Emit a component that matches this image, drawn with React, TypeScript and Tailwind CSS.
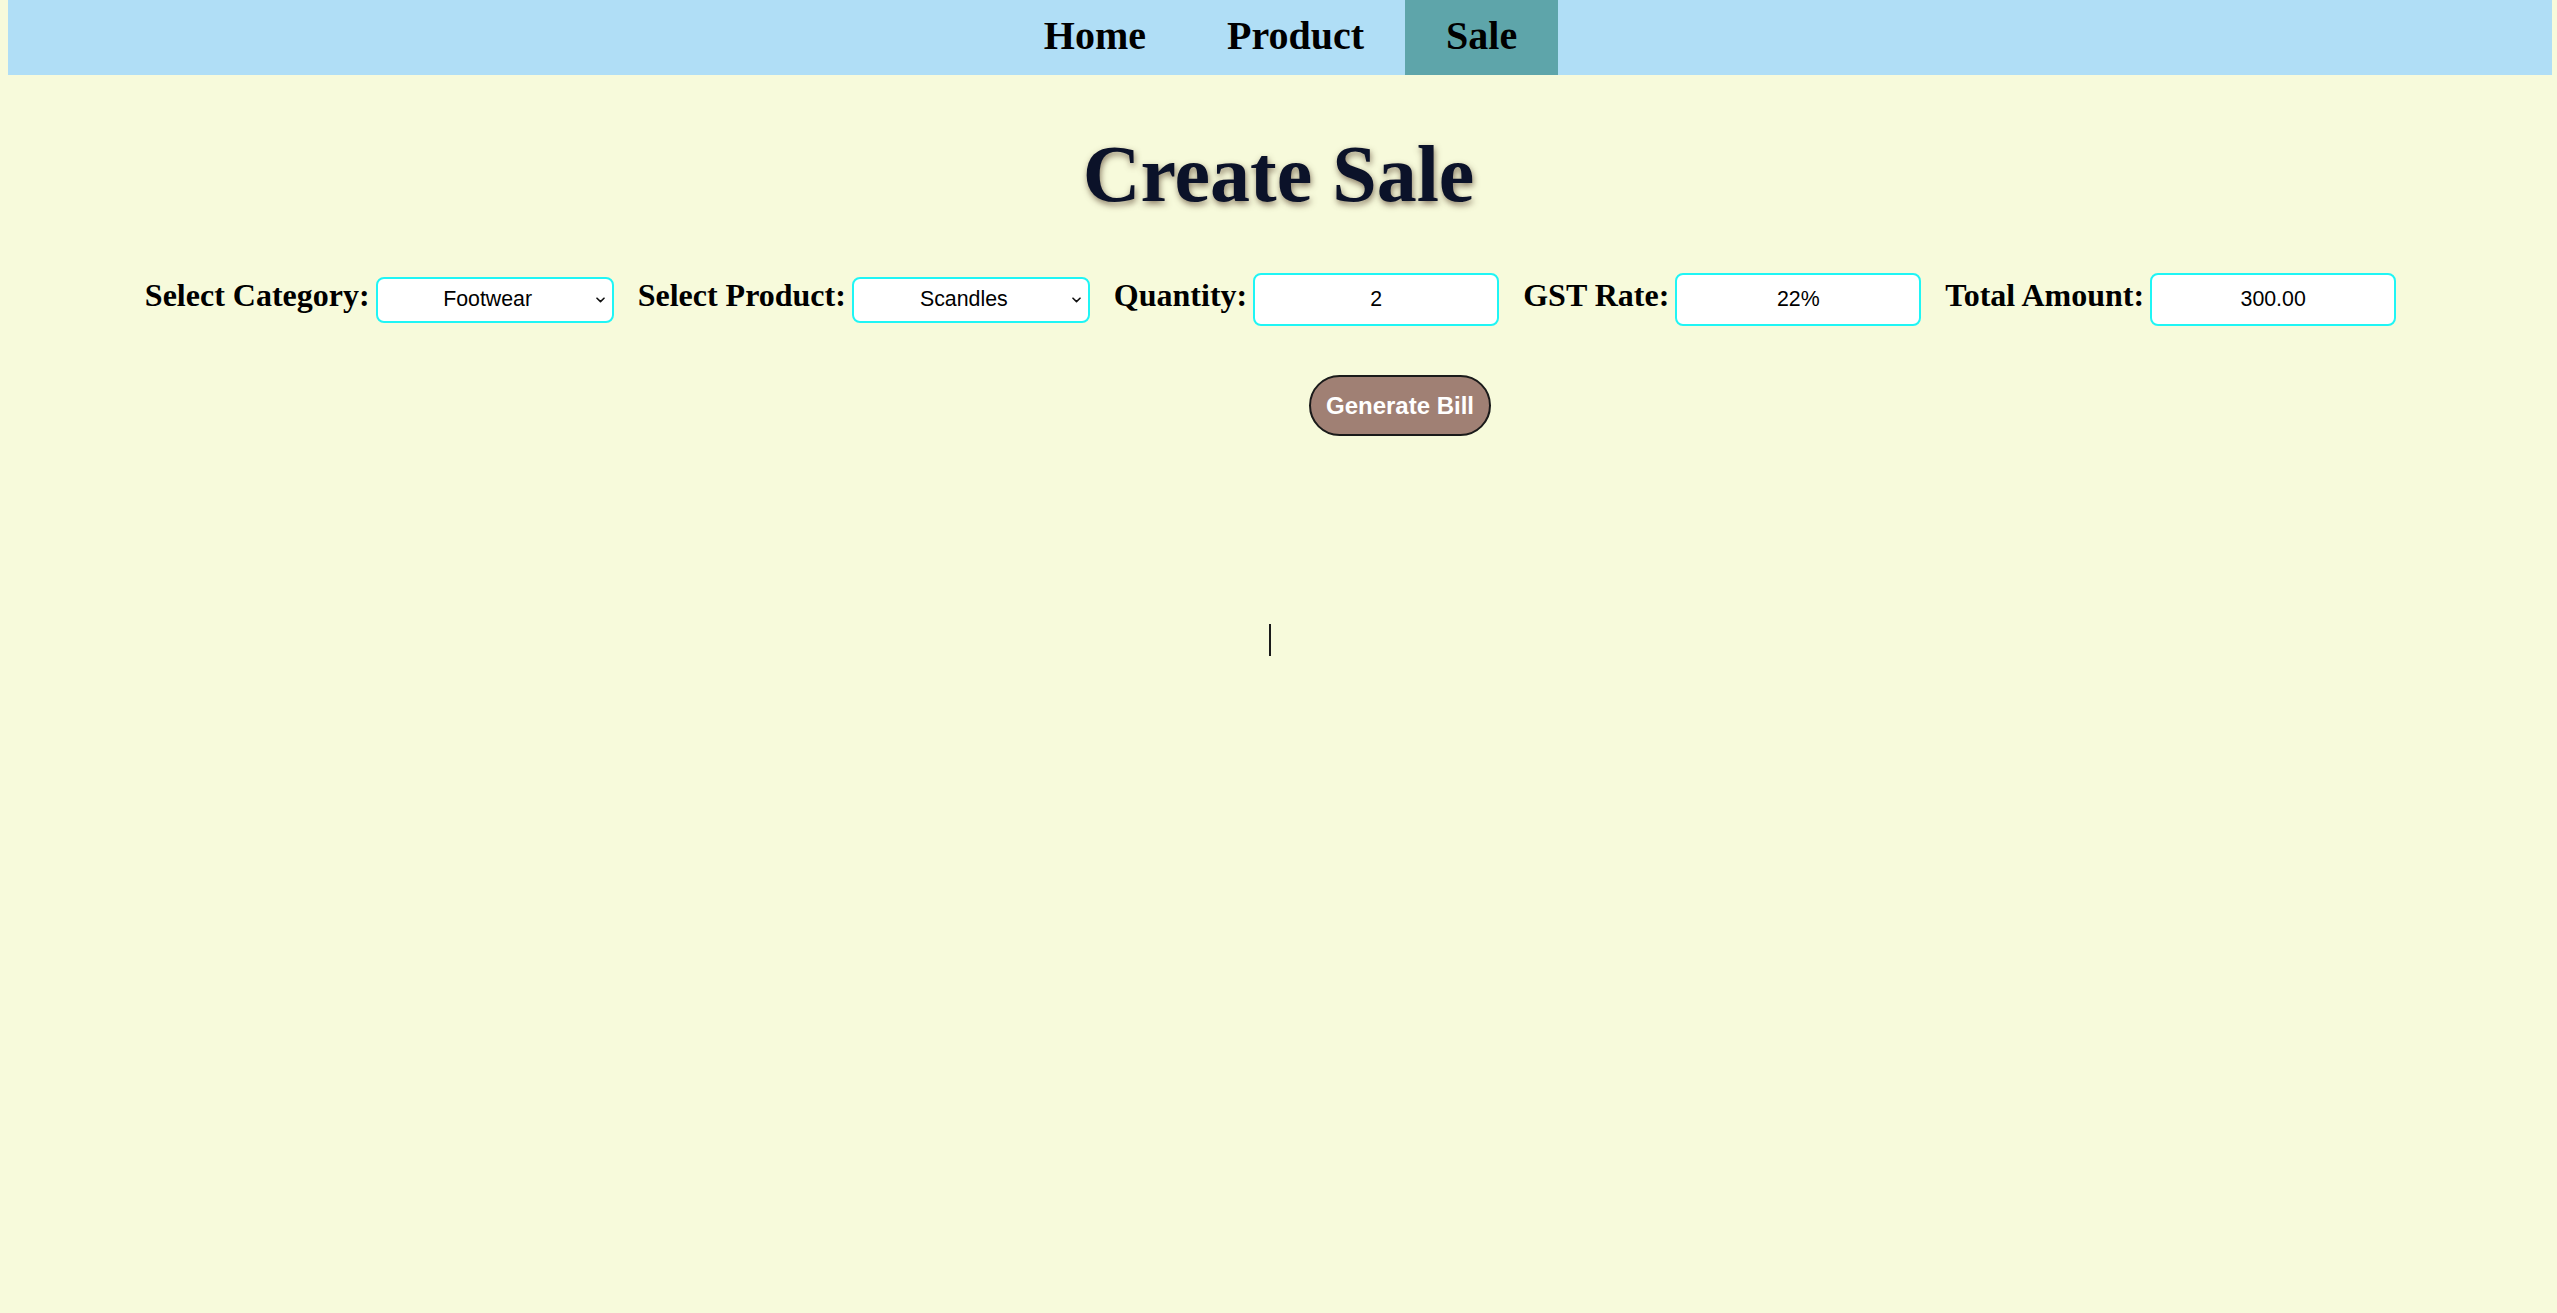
import React from "react";

const serif = "font-['Liberation_Serif','Times_New_Roman',serif]";
const sans = "font-['Liberation_Sans',Arial,sans-serif]";

function Chevron() {
  return (
    <svg
      className="pointer-events-none absolute right-[9px] top-1/2 -translate-y-1/2"
      width="9"
      height="6"
      viewBox="0 0 9 6"
      fill="none"
    >
      <path d="M1 1.2 L4.5 4.6 L8 1.2" stroke="#111" strokeWidth="1.6" strokeLinecap="round" strokeLinejoin="round" />
    </svg>
  );
}

function SelectBox({ value }: { value: string }) {
  return (
    <div className="relative">
      <select
        defaultValue={value}
        className={`${sans} appearance-none w-[238px] h-[46px] bg-white border-2 border-[#1ff5f5] rounded-[8px] text-[21.33px] text-black text-center [text-align-last:center] pr-[14px] outline-none`}
      >
        <option>{value}</option>
      </select>
      <Chevron />
    </div>
  );
}

function InputBox({ value }: { value: string }) {
  return (
    <input
      readOnly
      value={value}
      className={`${sans} w-[246px] h-[53px] bg-white border-2 border-[#1ff5f5] rounded-[8px] text-[21.33px] text-black text-center outline-none`}
    />
  );
}

function Label({ children }: { children: React.ReactNode }) {
  return (
    <span className={`${serif} font-bold text-[32px] leading-[36px] text-black mr-[6px]`}>{children}</span>
  );
}

export default function App() {
  return (
    <div className="min-h-screen w-full bg-[#f7fadb]">
      <nav className="ml-[8px] mr-[5px] h-[75px] bg-[#b0def6] flex justify-center">
        <a className={`${serif} font-bold text-[40px] leading-[72px] h-[75px] pl-[42px] pr-[40px] text-black`}>Home</a>
        <a className={`${serif} font-bold text-[40px] leading-[72px] h-[75px] px-[41px] text-black`}>Product</a>
        <a className={`${serif} font-bold text-[40px] leading-[72px] h-[75px] px-[41px] text-black bg-[#5ea5aa]`}>Sale</a>
      </nav>

      <h1
        className={`${serif} font-bold text-[80px] leading-[80px] text-[#0b1229] text-center mt-[59px] [text-shadow:1px_3px_6px_rgba(90,70,50,0.7)]`}
      >
        Create Sale
      </h1>

      <div className="mt-[59px] flex items-baseline justify-center gap-[24px] pr-[16px]">
        <div className="flex items-baseline">
          <Label>Select Category:</Label>
          <SelectBox value="Footwear" />
        </div>
        <div className="flex items-baseline">
          <Label>Select Product:</Label>
          <SelectBox value="Scandles" />
        </div>
        <div className="flex items-baseline">
          <Label>Quantity:</Label>
          <InputBox value="2" />
        </div>
        <div className="flex items-baseline">
          <Label>GST Rate:</Label>
          <InputBox value="22%" />
        </div>
        <div className="flex items-baseline">
          <Label>Total Amount:</Label>
          <InputBox value="300.00" />
        </div>
      </div>

      <div className="mt-[49px] pl-[1309px]">
        <button
          className={`${sans} font-bold text-[24px] leading-[27px] text-white bg-[#a08074] border-2 border-[#1a1a1a] rounded-full w-[182px] h-[61px]`}
        >
          Generate Bill
        </button>
      </div>

      <div className="mt-[188px] pl-[1269px]">
        <div className="w-[2px] h-[32px] bg-[#1a1a1a]" />
      </div>
    </div>
  );
}
